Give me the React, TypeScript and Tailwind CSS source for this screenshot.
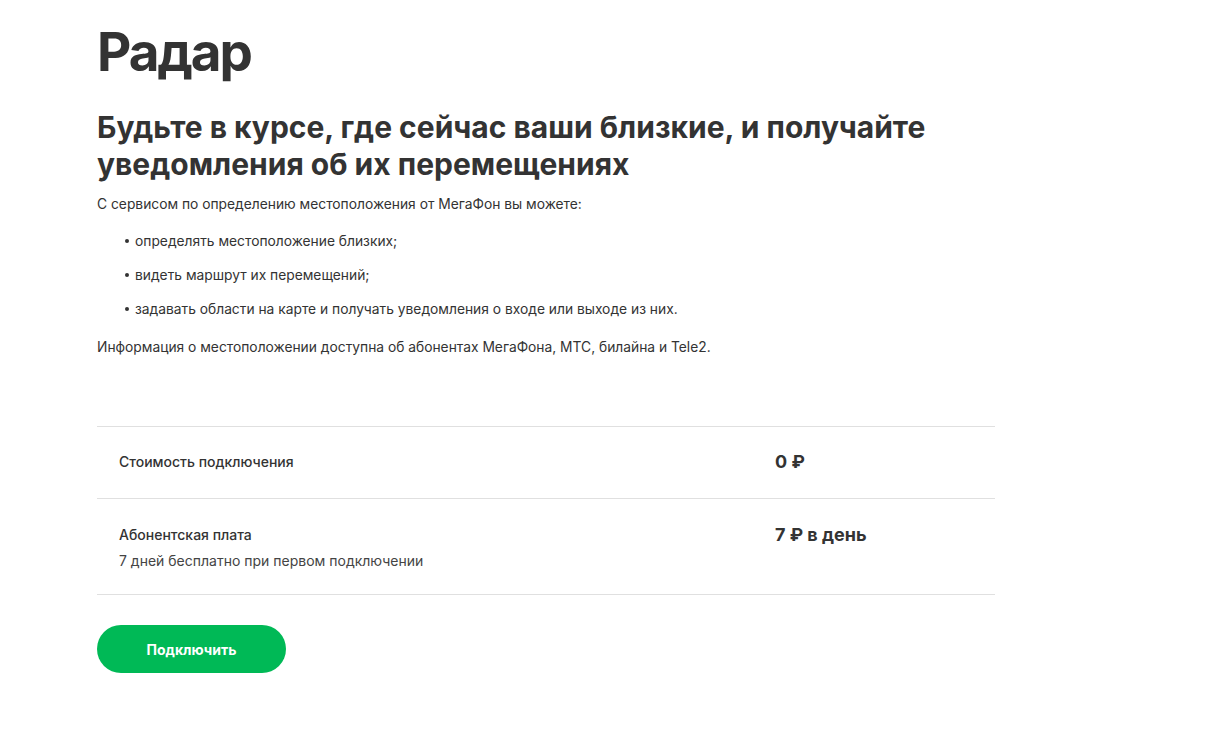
const font = { fontFamily: "Inter, 'Noto Sans', sans-serif" };

const bullets = [
  "определять местоположение близких;",
  "видеть маршрут их перемещений;",
  "задавать области на карте и получать уведомления о входе или выходе из них.",
];

const prices = [
  { label: "Стоимость подключения", note: "", value: "0 ₽" },
  { label: "Абонентская плата", note: "7 дней бесплатно при первом подключении", value: "7 ₽ в день" },
];

export default function App() {
  return (
    <main className="min-h-[745px] bg-white text-[#333333]" style={font}>
      <div className="pl-[97px] pt-[22px] w-[995px]">
        <h1 className="text-[53px] font-bold leading-[60px] tracking-[-2px]">Радар</h1>

        <h2 className="mt-[27px] text-[30px] font-bold leading-[37px]">
          Будьте в курсе, где сейчас ваши близкие, и получайте
          <br />
          уведомления об их перемещениях
        </h2>

        <p className="mt-[11px] text-[13.8px] leading-[20px]">
          С сервисом по определению местоположения от МегаФон вы можете:
        </p>
        <ul className="mt-[17px] flex flex-col gap-[14px] pl-[28px] text-[13.8px] leading-[20px]">
          {bullets.map((b) => (
            <li key={b} className="flex items-center gap-[6px]">
              <span className="h-[4px] w-[4px] rounded-full bg-[#333333]" />
              {b}
            </li>
          ))}
        </ul>
        <p className="mt-[18px] text-[13.8px] leading-[20px]">
          Информация о местоположении доступна об абонентах МегаФона, МТС, билайна и Tele2.
        </p>

        <div className="mt-[69px] border-t border-[#e0e0e0]">
          {prices.map((p) => (
            <div
              key={p.label}
              className={`flex border-b border-[#e0e0e0] pl-[22px] ${p.note ? "pt-[24px] pb-[21px]" : "pt-[23px] pb-[24px]"}`}
            >
              <div className="w-[656px]">
                <div className="text-[14px] font-medium leading-[24px]">{p.label}</div>
                {p.note && <div className="mt-[2px] text-[14px] leading-[24px] text-[#444]">{p.note}</div>}
              </div>
              <div className="text-[18px] font-bold leading-[24px]">{p.value}</div>
            </div>
          ))}
        </div>

        <button className="mt-[30px] h-[48px] w-[189px] rounded-full bg-[#00b956] text-[14px] font-bold text-white">
          Подключить
        </button>
      </div>
    </main>
  );
}
